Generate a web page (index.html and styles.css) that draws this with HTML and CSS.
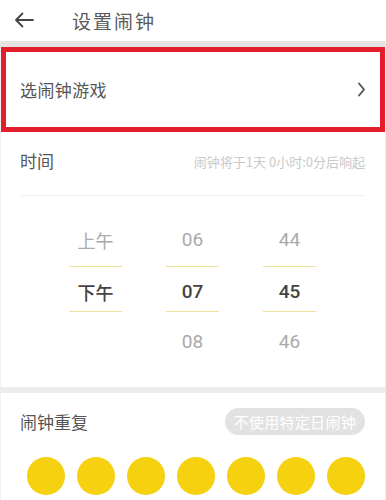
FILE: index.html
```html
<!DOCTYPE html>
<html lang="zh-CN">
<head>
<meta charset="utf-8">
<link rel="stylesheet" href="styles.css">
</head>
<body>
<div class="topbar">
  <svg class="back" width="20" height="16" viewBox="0 0 20 16"><path d="M19 8H2M8.5 1.5L2 8l6.5 6.5" fill="none" stroke="#444" stroke-width="1.8" stroke-linecap="round" stroke-linejoin="round"/></svg>
  <span class="title">设置闹钟</span>
</div>
<div class="gap-top"></div>
<div class="game-row">
  <span class="game-label">选闹钟游戏</span>
  <svg class="chev" width="9" height="15" viewBox="0 0 9 15"><path d="M2 1.5l5 6-5 6" fill="none" stroke="#555" stroke-width="1.9" stroke-linecap="round" stroke-linejoin="round"/></svg>
</div>
<div class="card time-card">
  <div class="time-head">
    <span class="sec-title">时间</span>
    <span class="hint">闹钟将于1天 0小时:0分后响起</span>
  </div>
  <div class="picker">
    <div class="col">
      <div class="cell c1">上午</div>
      <div class="cell c2 sel">下午</div>
      <div class="cell c3"></div>
    </div>
    <div class="col">
      <div class="cell c1 num">06</div>
      <div class="cell c2 sel num">07</div>
      <div class="cell c3 num">08</div>
    </div>
    <div class="col">
      <div class="cell c1 num">44</div>
      <div class="cell c2 sel num">45</div>
      <div class="cell c3 num">46</div>
    </div>
  </div>
</div>
<div class="gap-mid"></div>
<div class="card repeat-card">
  <div class="repeat-head">
    <span class="sec-title">闹钟重复</span>
    <span class="pill">不使用特定日闹钟</span>
  </div>
  <div class="days">
    <span class="day"></span><span class="day"></span><span class="day"></span><span class="day"></span><span class="day"></span><span class="day"></span><span class="day"></span>
  </div>
</div>
</body>
</html>
```
FILE: styles.css
```css
* { box-sizing: border-box; }
html, body { margin: 0; padding: 0; }
body {
  width: 386px;
  height: 500px;
  overflow: hidden;
  background: #f3f3f3;
  font-family: "Noto Sans CJK SC", "Noto Sans", sans-serif;
  color: #555;
}
.topbar {
  height: 41px;
  background: #fff;
  display: flex;
  align-items: center;
  padding-left: 14px;
}
.back { display: block; margin-top: -1px; }
.title {
  margin-left: 38px;
  font-size: 19px;
  letter-spacing: 2px;
  color: #5a5a5a;
  line-height: 1;
}
.gap-top { height: 6px; background: #e4e4e4; }
.game-row {
  height: 85px;
  margin: 0 1px;
  background: #fff;
  border: 5px solid #e31d2b;
  display: flex;
  align-items: center;
  justify-content: space-between;
  padding: 0 14px 0 14px;
}
.game-label { font-size: 17px; color: #555; letter-spacing: 0.4px; }
.chev { display: block; }
.card { background: #fff; margin: 0 1px; }
.time-card { height: 255px; }
.time-head {
  height: 64px;
  margin: 0 20px 0 19px;
  border-bottom: 1px solid #f1f1f1;
  display: flex;
  justify-content: space-between;
  align-items: flex-start;
  padding-top: 17px;
}
.sec-title { font-size: 17px; line-height: 24px; color: #555; }
.hint { font-size: 13px; line-height: 24px; color: #c9c9c9; margin-top: 1px; }
.picker {
  display: flex;
  gap: 44px;
  padding-left: 68px;
  padding-top: 19px;
}
.col { width: 53px; display: flex; flex-direction: column; }
.cell {
  text-align: center;
  font-size: 18px;
  color: #aaa;
}
.c1 { height: 52px; line-height: 50px; border-bottom: 1.5px solid #efe29a; }
.c2 { height: 45px; line-height: 50px; border-bottom: 1.5px solid #efe29a; }
.c3 { height: 52px; line-height: 60px; }
.sel { color: #444; font-weight: 500; }
.num { font-family: "Roboto", "Noto Sans", sans-serif; font-size: 19px; }
.gap-mid { height: 6px; background: #ececec; }
.repeat-card { height: 120px; padding-top: 15px; }
.repeat-head {
  display: flex;
  justify-content: space-between;
  align-items: center;
  padding: 0 20px 0 19px;
  height: 27px;
}
.pill {
  height: 27px;
  line-height: 27px;
  padding: 0 9px;
  border-radius: 14px;
  background: #e2e2e2;
  color: #fff;
  font-size: 15px;
  letter-spacing: 0.3px;
}
.days {
  display: flex;
  gap: 12px;
  padding-left: 26px;
  margin-top: 22px;
}
.day {
  width: 38px;
  height: 38px;
  border-radius: 50%;
  background: #f5d10f;
}
```
